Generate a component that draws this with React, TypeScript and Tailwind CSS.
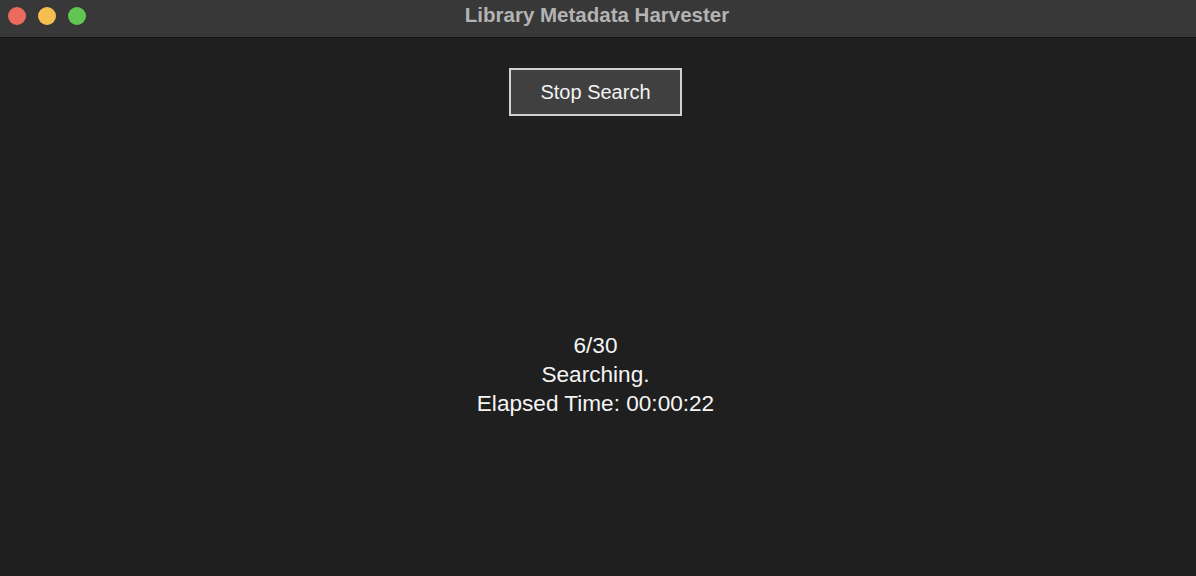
import React from "react";

export default function App() {
  return (
    <div
      className="w-[1196px] h-[576px] bg-[#1f1f1f] flex flex-col overflow-hidden"
      style={{ fontFamily: '"Liberation Sans", Arial, sans-serif' }}
    >
      <div className="relative h-[38px] bg-[#383838] border-b border-[#141414] flex items-center justify-center shrink-0">
        <div className="absolute left-[8px] top-[7px] flex gap-[12px]">
          <span className="w-[18px] h-[18px] rounded-full bg-[#ed6a5e]" />
          <span className="w-[18px] h-[18px] rounded-full bg-[#f5bf4f]" />
          <span className="w-[18px] h-[18px] rounded-full bg-[#61c554]" />
        </div>
        <span className="text-[20.5px] font-bold text-[#b3b3b3] leading-none -mt-[6px] -ml-[2px]">
          Library Metadata Harvester
        </span>
      </div>
      <div className="flex flex-col items-center pr-[5px]">
        <button className="mt-[30px] w-[173px] h-[48px] bg-[#404040] border-2 border-[#d2d2cc] text-[20px] text-[#f2f2f2] flex items-center justify-center">
          Stop Search
        </button>
        <div className="mt-[215px] flex flex-col items-center text-[22.6px] leading-[29px] text-[#f5f5f5]">
          <span>6/30</span>
          <span>Searching.</span>
          <span>Elapsed Time: 00:00:22</span>
        </div>
      </div>
    </div>
  );
}
